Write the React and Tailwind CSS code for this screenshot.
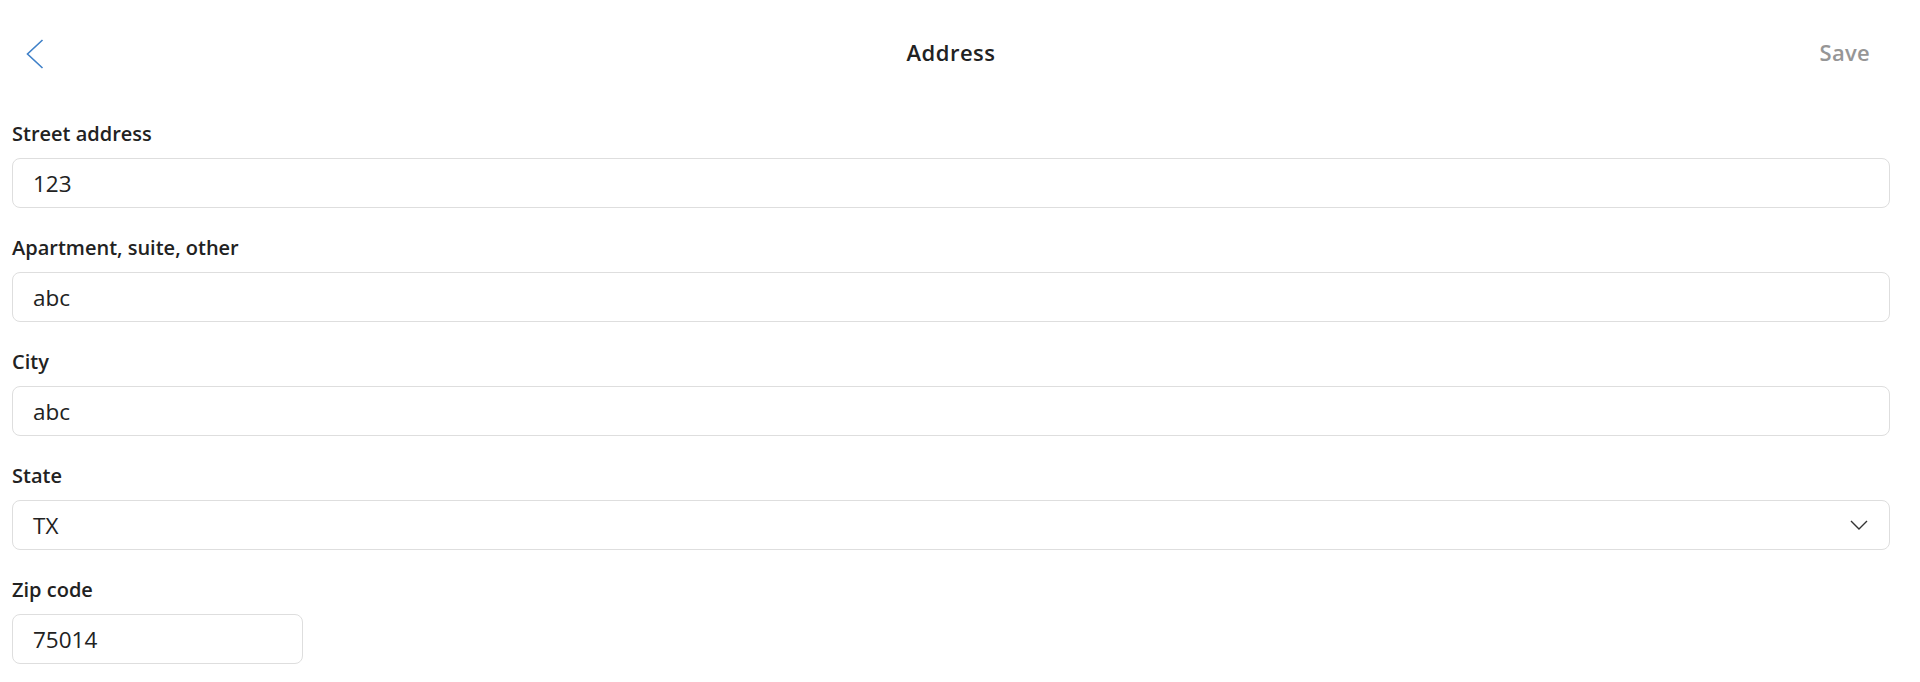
import React from "react";

function Field({ label, value, select, narrow }) {
  return (
    <div className="flex flex-col">
      <div className="h-[28px] text-[20px] leading-[28px] font-semibold text-[#222222] mb-[10px]">{label}</div>
      <div
        className={
          "h-[50px] border border-[#dedede] rounded-[8px] flex items-center pl-[20px] pr-[21px] " +
          (narrow ? "w-[291px]" : "w-full")
        }
      >
        <span className="flex-1 text-[22.5px] text-[#222222] leading-none pt-[4px]">{value}</span>
        {select && (
          <svg width="18" height="10" viewBox="0 0 18 10" fill="none">
            <path d="M1 1 L9 9 L17 1" stroke="#333333" strokeWidth="1.4" />
          </svg>
        )}
      </div>
    </div>
  );
}

export default function App() {
  return (
    <div
      className="w-[1920px] h-[682px] bg-white overflow-hidden"
      style={{ fontFamily: '"Open Sans", "Noto Sans", sans-serif' }}
    >
      <div className="w-[1902px] px-[12px]">
        <div className="h-[108px] flex items-center justify-between relative">
          <div className="pl-[14px] flex items-center">
            <svg width="18" height="30" viewBox="0 0 18 30" fill="none">
              <path d="M16.5 1 L1.5 15 L16.5 29" stroke="#3f80c8" strokeWidth="1.6" />
            </svg>
          </div>
          <div className="absolute left-0 right-0 text-center text-[22px] tracking-[0.5px] font-semibold text-[#222222] pointer-events-none pb-[3px]">
            Address
          </div>
          <div className="pr-[20px] text-[22px] tracking-[0.3px] font-semibold text-[#969696] pb-[3px]">Save</div>
        </div>
        <div className="pt-[11.5px] flex flex-col gap-[26px]">
          <Field label="Street address" value="123" />
          <Field label="Apartment, suite, other" value="abc" />
          <Field label="City" value="abc" />
          <Field label="State" value="TX" select />
          <Field label="Zip code" value="75014" narrow />
        </div>
      </div>
    </div>
  );
}
